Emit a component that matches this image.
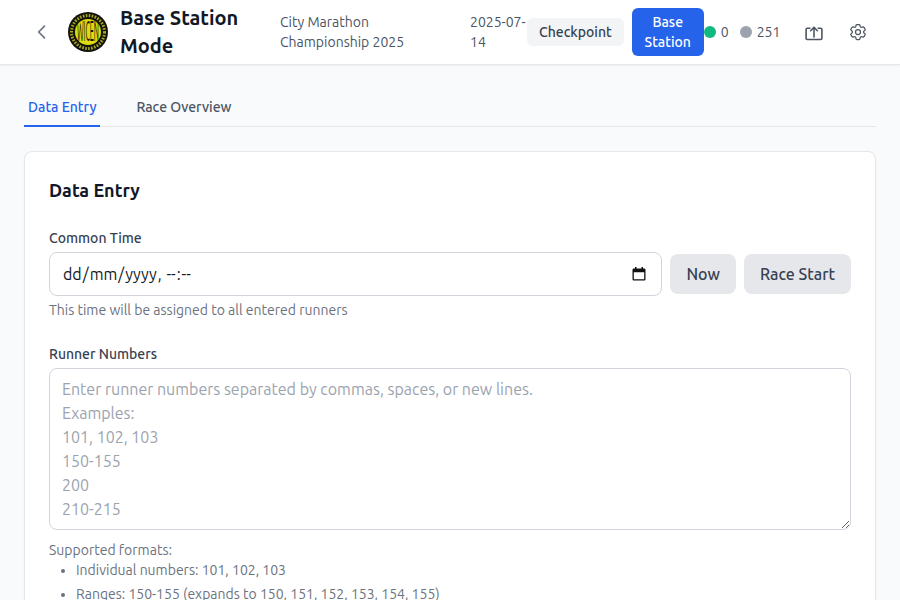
<script>
  let tab = 'entry';
</script>

<div class="page">
  <header>
    <button class="back" aria-label="Back">
      <svg width="20" height="20" viewBox="0 0 24 24" fill="none" stroke="currentColor" stroke-width="2" stroke-linecap="round" stroke-linejoin="round"><path d="M15 5l-7 7 7 7"/></svg>
    </button>
    <svg class="logo" width="40" height="40" viewBox="0 0 40 40">
      <circle cx="20" cy="20" r="20" fill="#14140a"/>
      <circle cx="20" cy="20" r="13" fill="#dcdc10"/>
      <circle cx="20" cy="20" r="16.5" fill="none" stroke="#a8a828" stroke-width="3" stroke-dasharray="1.6 1.4"/>
      <text x="20" y="11.8" transform="scale(1 2.5)" text-anchor="middle" class="logo-text" textLength="22" lengthAdjust="spacingAndGlyphs">WICEN</text>
    </svg>
    <h1>Base Station Mode</h1>
    <div class="event">City Marathon Championship 2025</div>
    <div class="date">2025-07-14</div>
    <div class="modes">
      <button class="mode">Checkpoint</button>
      <button class="mode active">Base Station</button>
    </div>
    <div class="stat"><span class="dot green"></span>0</div>
    <div class="stat"><span class="dot gray"></span>251</div>
    <button class="icon upload" aria-label="Upload">
      <svg width="20" height="20" viewBox="0 0 24 24" fill="none" stroke="currentColor" stroke-width="1.9" stroke-linecap="round" stroke-linejoin="round"><path d="M7 7.500H4A1.500 1.500 0 0 0 2.500 9v10.500A1.500 1.500 0 0 0 4 21h16a1.500 1.500 0 0 0 1.500-1.500V9A1.500 1.500 0 0 0 20 7.500h-3"/><path d="M12 18V6.500"/><path d="M8 10.500l4-4 4 4"/></svg>
    </button>
    <button class="icon gear" aria-label="Settings">
      <svg width="20" height="20" viewBox="0 0 24 24" fill="none" stroke="currentColor" stroke-width="1.5" stroke-linecap="round" stroke-linejoin="round"><path d="M9.594 3.94c.09-.542.56-.94 1.11-.94h2.593c.55 0 1.02.398 1.11.94l.213 1.281c.063.374.313.686.645.87.074.04.147.083.22.127.325.196.72.257 1.075.124l1.217-.456a1.125 1.125 0 0 1 1.37.49l1.296 2.247a1.125 1.125 0 0 1-.26 1.431l-1.003.827c-.293.241-.438.613-.43.992a7.723 7.723 0 0 1 0 .255c-.008.378.137.75.43.991l1.004.827c.424.35.534.955.26 1.43l-1.298 2.247a1.125 1.125 0 0 1-1.369.491l-1.217-.456c-.355-.133-.75-.072-1.076.124a6.47 6.47 0 0 1-.22.128c-.331.183-.581.495-.644.869l-.213 1.281c-.09.543-.56.94-1.11.94h-2.594c-.55 0-1.019-.398-1.11-.94l-.213-1.281c-.062-.374-.312-.686-.644-.87a6.52 6.52 0 0 1-.22-.127c-.325-.196-.72-.257-1.076-.124l-1.217.456a1.125 1.125 0 0 1-1.369-.49l-1.297-2.247a1.125 1.125 0 0 1 .26-1.431l1.004-.827c.292-.24.437-.613.43-.991a6.932 6.932 0 0 1 0-.255c.007-.38-.138-.751-.43-.992l-1.004-.827a1.125 1.125 0 0 1-.26-1.43l1.297-2.247a1.125 1.125 0 0 1 1.37-.491l1.216.456c.356.133.751.072 1.076-.124.072-.044.146-.086.22-.128.332-.183.582-.495.644-.869l.214-1.28Z"/><path d="M15 12a3 3 0 1 1-6 0 3 3 0 0 1 6 0Z"/></svg>
    </button>
  </header>

  <main>
    <nav>
      <button class="tab" class:on={tab === 'entry'} on:click={() => (tab = 'entry')}>Data Entry</button>
      <button class="tab" class:on={tab === 'overview'} on:click={() => (tab = 'overview')}>Race Overview</button>
    </nav>

    <section class="card">
      <h2>Data Entry</h2>

      <div class="lbl">Common Time</div>
      <div class="time-row">
        <!-- segments laid out like the native datetime field, in dd/mm order -->
        <div class="time-field">
          <span class="segs"><span>dd</span>/<span>mm</span>/<span>yyyy</span>, <span>--</span>:<span>--</span></span>
          <svg width="16" height="16" viewBox="0 0 16 16" fill="#111"><path d="M4 1h1.500v1.500h5V1H12v1.500h1.200c.7 0 1.300.6 1.300 1.300v9.400c0 .7-.6 1.300-1.300 1.300H2.800c-.7 0-1.300-.6-1.300-1.300V3.800c0-.7.6-1.300 1.300-1.300H4V1zM2.800 6.200v7h10.400v-7H2.800z"/></svg>
        </div>
        <button class="grey">Now</button>
        <button class="grey">Race Start</button>
      </div>
      <p class="hint">This time will be assigned to all entered runners</p>

      <label class="lbl second" for="nums">Runner Numbers</label>
      <textarea id="nums" rows="6" placeholder={"Enter runner numbers separated by commas, spaces, or new lines.\nExamples:\n101, 102, 103\n150-155\n200\n210-215"}></textarea>

      <div class="formats">
        <div>Supported formats:</div>
        <ul>
          <li>Individual numbers: 101, 102, 103</li>
          <li>Ranges: 150-155 (expands to 150, 151, 152, 153, 154, 155)</li>
        </ul>
      </div>
    </section>
  </main>
</div>

<style>
  :global(body) {
    margin: 0;
    background: #f9fafb;
    font-family: Ubuntu, "Noto Sans", "Open Sans", sans-serif;
    overflow: hidden;
  }
  button {
    font-family: inherit;
    border: none;
    cursor: pointer;
  }
  .page {
    height: 600px;
    overflow: hidden;
  }
  header {
    height: 64px;
    background: #fff;
    border-bottom: 1px solid #e5e7eb;
    box-shadow: 0 1px 2px rgba(0, 0, 0, 0.05);
    display: flex;
    align-items: center;
    padding: 0 24px;
    color: #111827;
  }
  header > * {
    flex: none;
  }
  .back {
    background: none;
    color: #6b7280;
    padding: 8px;
    margin-right: 8px;
    display: flex;
  }
  .logo {
    margin-right: 12px;
  }
  .logo-text {
    font-size: 11px;
    font-weight: 400;
    fill: #14140a;
  }
  h1 {
    font-size: 20px;
    line-height: 28px;
    font-weight: 700;
    margin: 0 24px 0 0;
    width: 136px;
  }
  .event {
    font-size: 14px;
    line-height: 20px;
    color: #4b5563;
    width: 190px;
    padding-right: 30px;
    box-sizing: border-box;
  }
  .date {
    font-size: 14px;
    line-height: 20px;
    color: #4b5563;
    width: 57px;
  }
  .modes {
    display: flex;
    gap: 8px;
    align-items: center;
  }
  .mode {
    background: #f3f4f6;
    color: #374151;
    font-size: 14px;
    font-weight: 500;
    line-height: 20px;
    padding: 4px 12px;
    border-radius: 6px;
  }
  .mode.active {
    background: #2563eb;
    color: #fff;
    width: 72px;
  }
  .stat {
    display: flex;
    align-items: center;
    gap: 5px;
    font-size: 14px;
    color: #4b5563;
  }
  .dot {
    width: 12px;
    height: 12px;
    border-radius: 50%;
    display: block;
  }
  .green { background: #10b981; }
  .gray { background: #9ca3af; margin-left: 11px; }
  .icon {
    background: none;
    color: #4b5563;
    padding: 8px;
    display: flex;
  }
  .upload { margin-left: 16px; }
  .gear { margin-left: 8px; }
  main {
    padding: 24px;
  }
  nav {
    display: flex;
    gap: 32px;
    border-bottom: 1px solid #e5e7eb;
    margin-bottom: 24px;
  }
  .tab {
    background: none;
    color: #4b5563;
    font-size: 14px;
    font-weight: 500;
    line-height: 20px;
    padding: 8px 4px;
    border-bottom: 2px solid transparent;
    margin-bottom: -1px;
  }
  .tab.on {
    color: #2563eb;
    border-bottom-color: #2563eb;
  }
  .card {
    background: #fff;
    border: 1px solid #e5e7eb;
    border-radius: 8px;
    padding: 24px;
    box-shadow: 0 1px 2px rgba(0, 0, 0, 0.05);
  }
  h2 {
    font-size: 18px;
    line-height: 28px;
    font-weight: 700;
    color: #111827;
    margin: 0 0 24px;
  }
  .lbl {
    display: block;
    font-size: 14px;
    line-height: 20px;
    font-weight: 500;
    color: #374151;
    margin-bottom: 4px;
  }
  .lbl.second {
    margin-top: 24px;
  }
  .time-row {
    display: flex;
    gap: 8px;
    align-items: center;
  }
  .time-field {
    flex: 1;
    min-width: 0;
    height: 44px;
    box-sizing: border-box;
    border: 1px solid #d1d5db;
    border-radius: 8px;
    padding: 0 14px 0 12px;
    background: #fff;
    display: flex;
    align-items: center;
    justify-content: space-between;
    font-size: 16px;
    color: #111827;
  }
  .segs {
    white-space: pre;
  }
  .segs span {
    padding: 0 1px;
  }
  .time-field svg {
    flex: none;
  }
  .grey {
    background: #e5e7eb;
    color: #374151;
    font-size: 16px;
    font-weight: 500;
    height: 40px;
    padding: 0 16px;
    border-radius: 8px;
  }
  .hint {
    font-size: 14px;
    line-height: 20px;
    color: #6b7280;
    margin: 4px 0 0;
  }
  textarea {
    display: block;
    width: 100%;
    box-sizing: border-box;
    border: 1px solid #d1d5db;
    border-radius: 8px;
    padding: 8px 12px;
    font-size: 16px;
    line-height: 24px;
    font-family: inherit;
    background: #fff;
  }
  textarea::placeholder {
    color: #9ca3af;
  }
  .formats {
    font-size: 14px;
    line-height: 20px;
    color: #6b7280;
    margin-top: 10px;
  }
  .formats ul {
    margin: 0;
    padding-left: 27px;
  }
  .formats li {
    margin-bottom: 4px;
  }
</style>
